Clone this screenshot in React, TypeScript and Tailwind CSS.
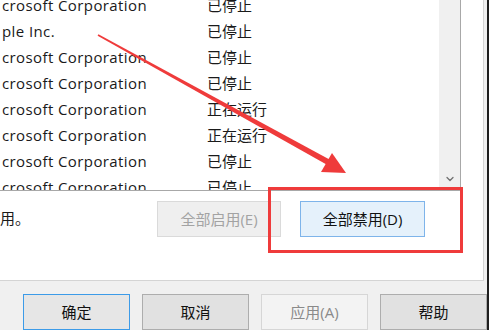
import { ChevronDown } from "lucide-react"

const ROWS = [
  { vendor: "crosoft Corporation", status: "已停止" },
  { vendor: "ple Inc.", status: "已停止" },
  { vendor: "crosoft Corporation", status: "已停止" },
  { vendor: "crosoft Corporation", status: "已停止" },
  { vendor: "crosoft Corporation", status: "正在运行" },
  { vendor: "crosoft Corporation", status: "正在运行" },
  { vendor: "crosoft Corporation", status: "已停止" },
  { vendor: "crosoft Corporation", status: "已停止" },
]

const FONT = "font-['Open_Sans','Noto_Sans_CJK_SC',sans-serif]"

function DialogButton({
  label,
  variant = "normal",
}: {
  label: string
  variant?: "normal" | "default" | "disabled"
}) {
  const styles = {
    normal: "border-[#adadad] bg-[#e1e1e1] text-[#111]",
    default: "border-[#3c9be8] bg-[#e6e6e6] text-[#111]",
    disabled: "border-[#d6d6d6] bg-[#f3f3f3] text-[#8a8a8a]",
  }
  return (
    <div
      className={`flex h-[36px] w-[107px] items-center justify-center border text-[15px] ${styles[variant]}`}
    >
      {label}
    </div>
  )
}

export default function App() {
  return (
    <div className={`relative flex h-[330px] w-[495px] overflow-hidden bg-white ${FONT}`}>
      <div className="flex w-[487px] flex-col bg-[#f0f0f0]">
        {/* tab page */}
        <div className="flex h-[283px] w-[484px] flex-col border-r border-b border-[#d4d4d4] bg-white">
          {/* service list */}
          <div className="flex h-[191px] w-[461px] border-r border-b border-[#a8a8a8]">
            <div className="flex-1 overflow-hidden">
              <div className="-mt-[8px] flex flex-col">
                {ROWS.map((row, i) => (
                  <div key={i} className="flex h-[26px] items-center text-[15px] text-[#1a1a1a]">
                    <span className="w-[207px] pl-[2px] tracking-[0.4px]">{row.vendor}</span>
                    <span>{row.status}</span>
                  </div>
                ))}
              </div>
            </div>
            <div className="flex w-[21px] flex-col items-center justify-end bg-[#f0f0f0] pb-[5px]">
              <ChevronDown className="h-[12px] w-[12px] text-[#707070]" strokeWidth={2.5} />
            </div>
          </div>

          {/* bulk actions */}
          <div className="flex items-start pt-[10px]">
            <div className="w-[157px] pt-[4px] text-[15px] leading-[26px] text-[#1a1a1a]">用。</div>
            <div className="flex h-[36px] w-[124px] items-center justify-center border border-[#dadada] bg-[#efefef] text-[15px] text-[#a3a3a3]">
              全部启用(E)
            </div>
            <div className="ml-[19px] flex h-[36px] w-[125px] items-center justify-center border border-[#7eb4ea] bg-[#e5f1fb] text-[15px] text-[#111]">
              全部禁用(D)
            </div>
          </div>
        </div>

        {/* dialog buttons */}
        <div className="flex gap-[12px] pt-[13px] pl-[23px]">
          <DialogButton label="确定" variant="default" />
          <DialogButton label="取消" />
          <DialogButton label="应用(A)" variant="disabled" />
          <DialogButton label="帮助" />
        </div>
      </div>
      <div className="w-[2px] bg-[#1e1e1e]" />

      {/* annotation: red box */}
      <div className="absolute top-[187px] left-[268px] h-[66px] w-[195px] border-[3px] border-[#ef3b3b]" />

      {/* annotation: red arrow */}
      <svg className="absolute inset-0" width="495" height="330" viewBox="0 0 495 330">
        <polygon points="98.4,34.3 97.6,35.7 326.5,164.6 329.5,159.4" fill="#ef3b3b" />
        <polygon points="332,153 321,172 346,173" fill="#ef3b3b" />
      </svg>
    </div>
  )
}
